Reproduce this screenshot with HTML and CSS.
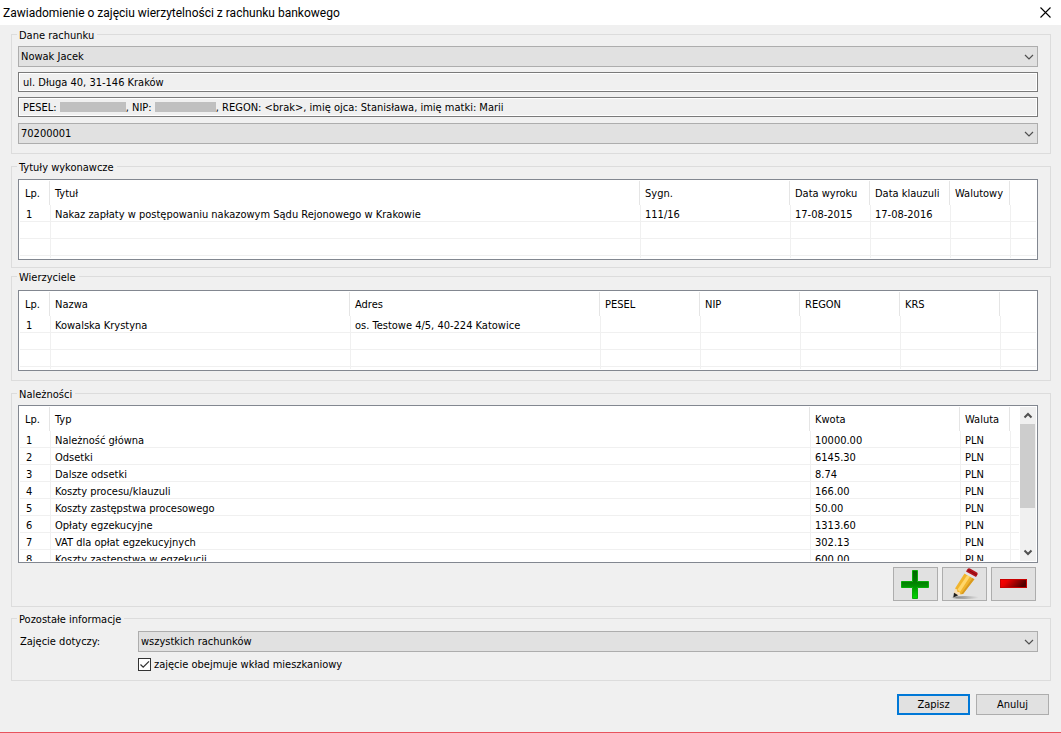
FILE: index.html
```html
<!DOCTYPE html>
<html lang="pl">
<head>
<meta charset="utf-8">
<title>Zawiadomienie o zajęciu wierzytelności z rachunku bankowego</title>
<link rel="stylesheet" href="styles.css">
</head>
<body>
<div class="window">
  <header class="titlebar">
    <h1 class="title">Zawiadomienie o zajęciu wierzytelności z rachunku bankowego</h1>
    <button class="close" type="button" aria-label="Zamknij">
      <svg width="11" height="11" viewBox="0 0 11 11"><path d="M0.5 0.5L10.500 10.500M10.500 0.500L0.500 10.500" stroke="#000" stroke-width="1.100"/></svg>
    </button>
  </header>

  <form class="content">
    <fieldset class="group account">
      <legend>Dane rachunku</legend>
      <div class="combo">
        <select aria-label="Dłużnik"><option>Nowak Jacek</option></select>
        <svg class="chevron" viewBox="0 0 10 6"><path d="M1 1L5 5L9 1" fill="none" stroke="#505050" stroke-width="1.200"/></svg>
      </div>
      <input class="field" type="text" readonly aria-label="Adres" value="ul. Długa 40, 31-146 Kraków">
      <div class="field details">PESEL: <span class="redacted pesel"></span>, NIP: <span class="redacted nip"></span>, REGON: &lt;brak&gt;, imię ojca: Stanisława, imię matki: Marii</div>
      <div class="combo">
        <select aria-label="Numer rachunku"><option>70200001</option></select>
        <svg class="chevron" viewBox="0 0 10 6"><path d="M1 1L5 5L9 1" fill="none" stroke="#505050" stroke-width="1.200"/></svg>
      </div>
    </fieldset>

    <fieldset class="group titles">
      <legend>Tytuły wykonawcze</legend>
      <div class="list short">
        <div class="view">
          <table>
            <colgroup><col class="w30"><col><col class="w150"><col class="w80"><col class="w80"><col class="w60"><col class="rest"></colgroup>
            <thead><tr><th>Lp.</th><th>Tytuł</th><th>Sygn.</th><th>Data wyroku</th><th>Data klauzuli</th><th>Walutowy</th><th></th></tr></thead>
            <tbody>
              <tr><td>1</td><td>Nakaz zapłaty w postępowaniu nakazowym Sądu Rejonowego w Krakowie</td><td>111/16</td><td>17-08-2015</td><td>17-08-2016</td><td></td><td></td></tr>
              <tr><td></td><td></td><td></td><td></td><td></td><td></td><td></td></tr>
              <tr><td></td><td></td><td></td><td></td><td></td><td></td><td></td></tr>
              <tr><td></td><td></td><td></td><td></td><td></td><td></td><td></td></tr>
            </tbody>
          </table>
        </div>
      </div>
    </fieldset>

    <fieldset class="group creditors">
      <legend>Wierzyciele</legend>
      <div class="list short">
        <div class="view">
          <table>
            <colgroup><col class="w30"><col><col class="w250"><col class="w100"><col class="w100"><col class="w100"><col class="w100"><col class="rest wide"></colgroup>
            <thead><tr><th>Lp.</th><th>Nazwa</th><th>Adres</th><th>PESEL</th><th>NIP</th><th>REGON</th><th>KRS</th><th></th></tr></thead>
            <tbody>
              <tr><td>1</td><td>Kowalska Krystyna</td><td>os. Testowe 4/5, 40-224 Katowice</td><td></td><td></td><td></td><td></td><td></td></tr>
              <tr><td></td><td></td><td></td><td></td><td></td><td></td><td></td><td></td></tr>
              <tr><td></td><td></td><td></td><td></td><td></td><td></td><td></td><td></td></tr>
              <tr><td></td><td></td><td></td><td></td><td></td><td></td><td></td><td></td></tr>
            </tbody>
          </table>
        </div>
      </div>
    </fieldset>

    <fieldset class="group dues">
      <legend>Należności</legend>
      <div class="list tall">
        <div class="view">
          <table>
            <colgroup><col class="w30"><col><col class="w150"><col class="w50"><col class="narrow"></colgroup>
            <thead><tr><th>Lp.</th><th>Typ</th><th>Kwota</th><th>Waluta</th><th></th></tr></thead>
            <tbody>
              <tr><td>1</td><td>Należność główna</td><td>10000.00</td><td>PLN</td><td></td></tr>
              <tr><td>2</td><td>Odsetki</td><td>6145.30</td><td>PLN</td><td></td></tr>
              <tr><td>3</td><td>Dalsze odsetki</td><td>8.74</td><td>PLN</td><td></td></tr>
              <tr><td>4</td><td>Koszty procesu/klauzuli</td><td>166.00</td><td>PLN</td><td></td></tr>
              <tr><td>5</td><td>Koszty zastępstwa procesowego</td><td>50.00</td><td>PLN</td><td></td></tr>
              <tr><td>6</td><td>Opłaty egzekucyjne</td><td>1313.60</td><td>PLN</td><td></td></tr>
              <tr><td>7</td><td>VAT dla opłat egzekucyjnych</td><td>302.13</td><td>PLN</td><td></td></tr>
              <tr><td>8</td><td>Koszty zastępstwa w egzekucji</td><td>600.00</td><td>PLN</td><td></td></tr>
            </tbody>
          </table>
        </div>
        <div class="scrollbar">
          <svg class="arrow" viewBox="0 0 16 17"><path d="M4.500 10.500L8 7L11.500 10.500" fill="none" stroke="#505050" stroke-width="2"/></svg>
          <div class="track"><div class="thumb"></div></div>
          <svg class="arrow" viewBox="0 0 16 17"><path d="M4.500 6.500L8 10L11.500 6.500" fill="none" stroke="#505050" stroke-width="2"/></svg>
        </div>
      </div>
      <div class="tools">
        <button class="tool" type="button" aria-label="Dodaj">
          <svg width="30" height="30" viewBox="0 0 30 30">
            <defs>
              <linearGradient id="green" x2="0" y2="1"><stop offset="0" stop-color="#006400"/><stop offset=".45" stop-color="#008200"/><stop offset="1" stop-color="#00d800"/></linearGradient>
            </defs>
            <path d="M11.500 1.500h5v11h11v6h-11v11h-5v-11h-11v-6h11z" fill="url(#green)" stroke="#08aa08"/>
          </svg>
        </button>
        <button class="tool" type="button" aria-label="Edytuj">
          <svg width="30" height="32" viewBox="0 0 30 32">
            <defs>
              <linearGradient id="shade"><stop offset="0" stop-color="#888" stop-opacity="0"/><stop offset=".2" stop-color="#888"/><stop offset="1" stop-color="#888" stop-opacity="0"/></linearGradient>
            </defs>
            <ellipse cx="15" cy="29.500" rx="14" ry="1.500" fill="url(#shade)"/>
            <path d="M5 20L12 25.500L8.500 27.500L4 25.500z" fill="#f8dcb0"/>
            <path d="M5 20.500L14.500 5.500L24.500 11L13 26L10.500 26.500L9.500 24L7.500 24L7 21.500z" fill="#f0b42c"/>
            <path d="M7.500 21.500L17.300 7L20 8.500L10 24z" fill="#ffd66a"/>
            <path d="M11 26L22.500 10L24.500 11L13 26z" fill="#d89a20"/>
            <path d="M14.500 5.500L16 3.500L26 9L24.500 11z" fill="#e4e4e8"/>
            <path d="M16 3.500L17.500 1Q18.500 -.2 20 .5L27 4.500Q28 5.300 27.500 6.500L26 9z" fill="#b4141c"/>
            <path d="M18 2L26.800 7" stroke="#8a0c12"/>
            <path d="M4 24.800L8.200 27.300L3.300 29.500z" fill="#1c1c1c"/>
          </svg>
        </button>
        <button class="tool" type="button" aria-label="Usuń">
          <svg width="28" height="10" viewBox="0 0 28 10">
            <defs>
              <linearGradient id="red" x2="1" y2=".3"><stop offset="0" stop-color="#f00"/><stop offset=".3" stop-color="#e80000"/><stop offset="1" stop-color="#500000"/></linearGradient>
            </defs>
            <rect x=".5" y=".5" width="26" height="8" fill="url(#red)" stroke="#c80000"/>
          </svg>
        </button>
      </div>
    </fieldset>

    <fieldset class="group other">
      <legend>Pozostałe informacje</legend>
      <label class="caption" for="scope">Zajęcie dotyczy:</label>
      <div class="combo">
        <select id="scope"><option>wszystkich rachunków</option></select>
        <svg class="chevron" viewBox="0 0 10 6"><path d="M1 1L5 5L9 1" fill="none" stroke="#505050" stroke-width="1.200"/></svg>
      </div>
      <label class="check"><span class="box"><input type="checkbox" checked><svg viewBox="0 0 13 13"><path d="M2.500 6.500L5.200 9.200L11 3.400" fill="none" stroke="#333" stroke-width="1.300"/></svg></span>zajęcie obejmuje wkład mieszkaniowy</label>
    </fieldset>

    <footer class="actions">
      <button class="action primary" type="submit">Zapisz</button>
      <button class="action" type="button">Anuluj</button>
    </footer>
  </form>
</div>
</body>
</html>
```
FILE: styles.css
```css
* {
  box-sizing: border-box;
}

body {
  margin: 0;
  background: #f0f0f0;
  color: #000;
  font: 11px/13px "DejaVu Sans Condensed", Tahoma, sans-serif;
}

button,
input,
select {
  margin: 0;
  color: inherit;
  font: inherit;
}

.window {
  display: flex;
  flex-direction: column;
  min-height: 100vh;
  border-bottom: 1px solid #e8545e;
}

.titlebar {
  display: flex;
  align-items: center;
  justify-content: space-between;
  height: 25px;
  padding: 0 10px 0 3px;
  background: #fff;
}

.title {
  margin: 0;
  font: 12px/16px Roboto, "Segoe UI", sans-serif;
}

.close {
  display: flex;
  padding: 0;
  border: 0;
  background: none;
}

.content {
  display: flex;
  flex-direction: column;
  padding: 2px 10px 0 11px;
}

.group {
  min-width: 0;
  margin: 0;
  padding: 5px 12px 9px 6px;
  border: 1px solid #dcdcdc;
}

.group legend {
  margin-left: -1px;
  padding: 2px 3px 0 2px;
}

.account {
  display: flex;
  flex-direction: column;
  margin-bottom: 5px;
  padding-top: 4px;
}

.account .field {
  margin-top: 5px;
}

.account .field + .combo {
  margin-top: 6px;
}

.titles {
  margin-bottom: 1px;
  padding-bottom: 7px;
}

.creditors {
  margin-bottom: 5px;
  padding-top: 6px;
}

.dues {
  margin-bottom: 4px;
  padding-top: 4px;
  padding-bottom: 5px;
}

.combo {
  display: grid;
  align-items: center;
}

.combo select,
.combo .chevron {
  grid-area: 1 / 1;
}

.combo select {
  width: 100%;
  height: 21px;
  padding: 0 20px 0 2px;
  border: 1px solid #adadad;
  border-radius: 0;
  background: #e1e1e1;
  appearance: none;
}

.chevron {
  width: 10px;
  height: 6px;
  margin-right: 4px;
  justify-self: end;
  pointer-events: none;
}

.field {
  width: 100%;
  height: 20px;
  padding: 0 4px;
  border: 1px solid #7a7a7a;
  border-radius: 0;
  background: #f0f0f0;
  box-shadow: inset 0 0 0 1px #fff;
  line-height: 18px;
}

.details {
  line-height: 20px;
  white-space: nowrap;
  overflow: hidden;
}

.redacted {
  display: inline-block;
  height: 10px;
  background: #c0c0c0;
  vertical-align: -1px;
}

.pesel {
  width: 66px;
}

.nip {
  width: 61px;
}

.list {
  display: flex;
  padding: 1px;
  border: 1px solid #828790;
  background: #fff;
}

.short {
  height: 81px;
}

.tall {
  height: 158px;
}

.view {
  flex: 1;
  min-width: 0;
  overflow: hidden;
}

table {
  width: 100%;
  border-spacing: 0;
  table-layout: fixed;
}

.w30 { width: 30px; }
.w50 { width: 50px; }
.w60 { width: 60px; }
.w80 { width: 80px; }
.w100 { width: 100px; }
.w150 { width: 150px; }
.w250 { width: 250px; }
.rest { width: 26px; }
.rest.wide { width: 36px; }
.narrow { width: 9px; }

th,
td {
  overflow: hidden;
  text-align: left;
  white-space: nowrap;
}

th {
  height: 24px;
  padding: 0 0 0 5px;
  border-right: 1px solid #e5e5e5;
  font-weight: normal;
}

th:last-child {
  border-right: 0;
}

td {
  height: 17px;
  padding: 2px 0 0 4px;
  border-bottom: 1px solid #f0f0f0;
  border-left: 1px solid #f0f0f0;
}

td:first-child {
  padding-left: 6px;
  border-left: 0;
}

th:last-child,
td:last-child {
  padding: 0;
}

.scrollbar {
  display: flex;
  flex-direction: column;
  width: 16px;
  margin-left: 1px;
  background: #f0f0f0;
}

.arrow {
  width: 16px;
  height: 17px;
}

.track {
  flex: 1;
}

.thumb {
  width: 15px;
  height: 70%;
  background: #cdcdcd;
}

.tools {
  display: flex;
  justify-content: flex-end;
  gap: 4px;
  margin-top: 4px;
  padding-right: 2px;
}

.tool {
  display: flex;
  align-items: center;
  justify-content: center;
  width: 45px;
  height: 34px;
  padding: 0;
  border: 1px solid #adadad;
  background: #e1e1e1;
}

.other {
  display: grid;
  grid-template-columns: 120px 1fr;
  row-gap: 6px;
}

.caption {
  padding: 4px 0 0 2px;
}

.check {
  display: flex;
  grid-column: 2;
  gap: 3px;
  justify-self: start;
}

.box {
  display: grid;
  width: 13px;
  height: 13px;
}

.box input,
.box svg {
  grid-area: 1 / 1;
  width: 13px;
  height: 13px;
}

.box input {
  border: 1px solid #333;
  background: #fff;
  appearance: none;
}

.box svg {
  visibility: hidden;
  pointer-events: none;
}

.box input:checked + svg {
  visibility: visible;
}

.actions {
  display: flex;
  justify-content: flex-end;
  gap: 6px;
  padding: 13px 2px 0 0;
}

.action {
  width: 73px;
  height: 21px;
  padding: 0;
  border: 1px solid #adadad;
  background: #e1e1e1;
}

.primary {
  border: 2px solid #0078d7;
}
```
